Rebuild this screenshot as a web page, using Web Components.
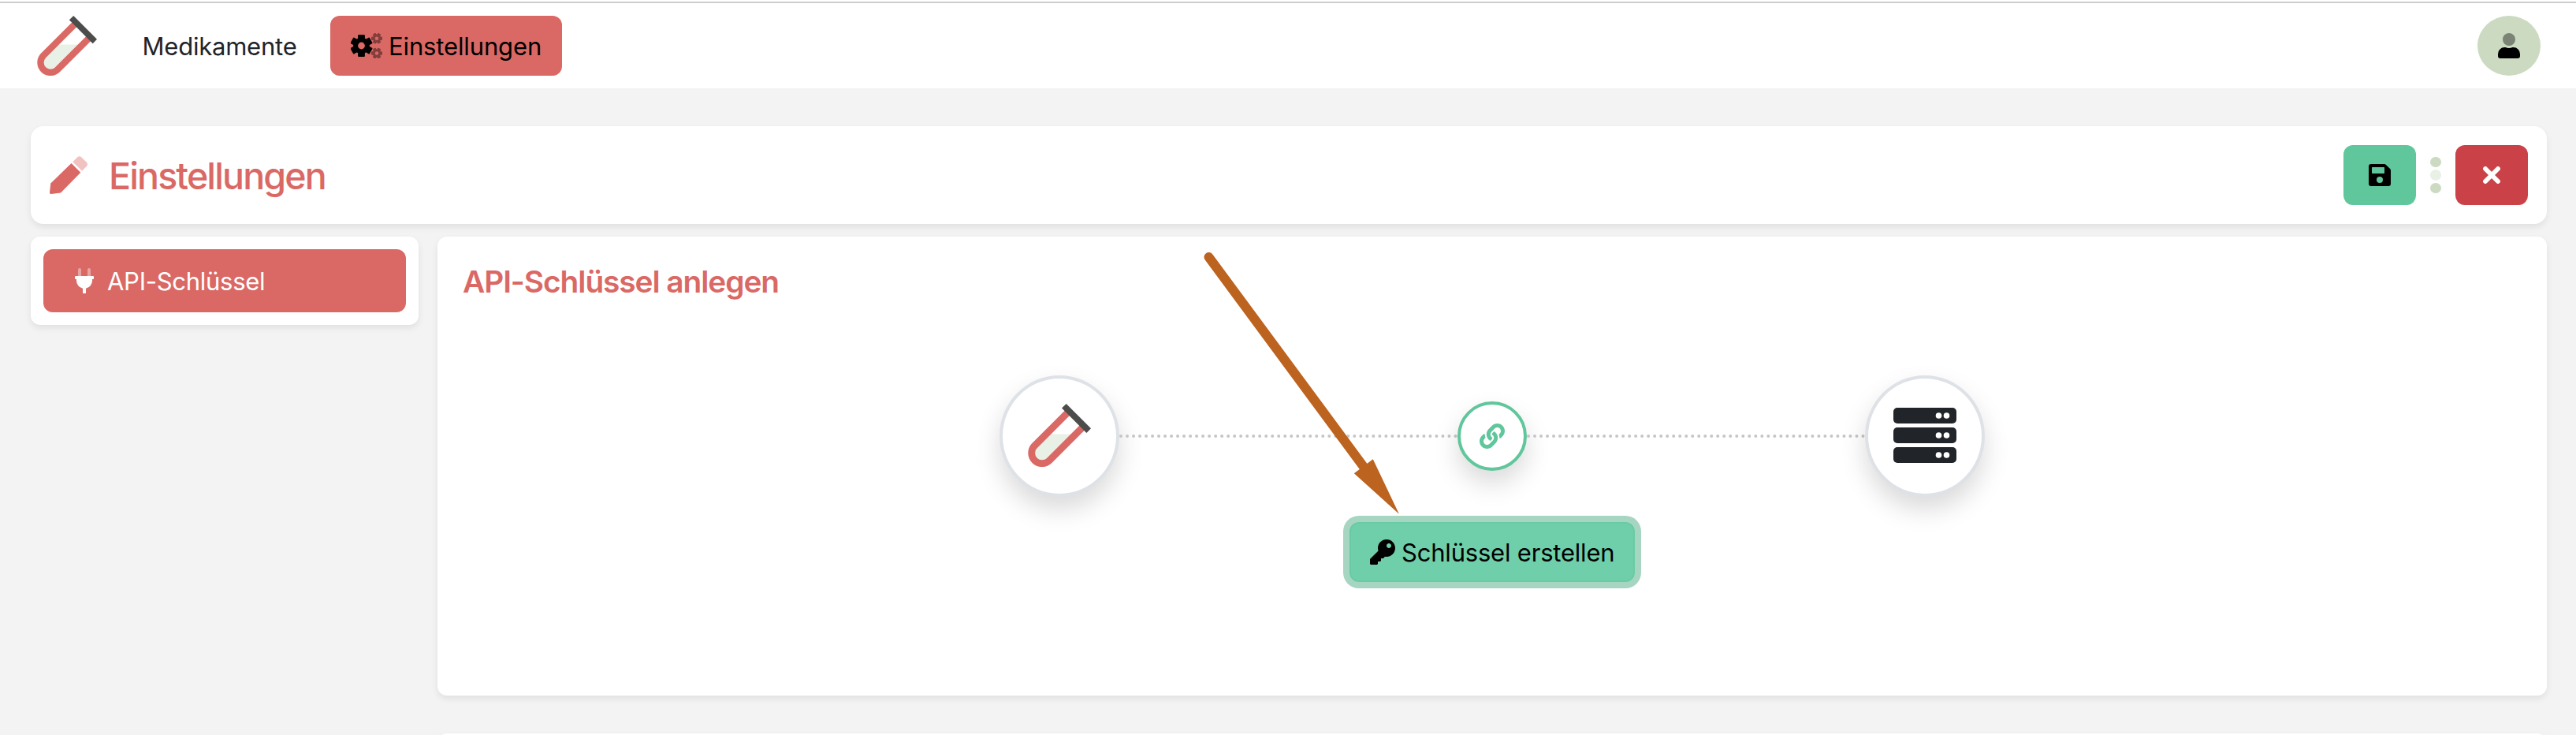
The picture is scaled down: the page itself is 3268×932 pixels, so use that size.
<!DOCTYPE html>
<html lang="de">
<head>
<meta charset="utf-8">
<title>Einstellungen</title>
<style>
html,body{margin:0;height:932px;overflow:hidden;background:#f3f3f3}
body{font-family:Inter,"Liberation Sans",sans-serif;font-size:31px;line-height:48px;color:#212529}
</style>
</head>
<body>
<app-page></app-page>
<script>
const define = (name, html) => customElements.define(name, class extends HTMLElement {
  constructor() {
    super();
    const t = document.createElement('template');
    t.innerHTML = html;
    this.attachShadow({mode: 'open'}).append(t.content.cloneNode(true));
  }
});

const spokes = (cx, cy, r, w, turn) => [0, 60, 120].map(a =>
  `<rect x="${cx - w / 2}" y="${cy - r}" width="${w}" height="${2 * r}" rx="1" transform="rotate(${a + turn} ${cx} ${cy})"/>`).join('');
const gear = (id, cx, cy, r, body, hole, w, turn, op) =>
  `<mask id="${id}"><rect width="40" height="40" fill="#fff"/><circle cx="${cx}" cy="${cy}" r="${hole}" fill="#000"/></mask>
   <g mask="url(#${id})" opacity="${op}"><circle cx="${cx}" cy="${cy}" r="${body}"/>${spokes(cx, cy, r, w, turn)}</g>`;

const ICONS = {
  tube: ['0 0 80 80', `<path d="M25 38.5H56L24 69.5A9.3 9.3 0 0 1 10.5 56Z" fill="#e9f1e6"/>
    <path d="M52.3 9.3 8.3 53.3A13.3 13.3 0 0 0 27.1 72.1L71.1 28.1" fill="none" stroke="#da6965" stroke-width="8.8"/>
    <path d="M48.7 0 80 31.3 74.4 37 43 5.6Z" fill="#4c4c4b"/>`],
  gears: ['0 0 40 32', gear('a', 13.5, 16, 14, 10.4, 4.4, 8.8, 0, 1) + gear('b', 33, 6.7, 7, 5.2, 2.2, 4.4, 30, .4) + gear('c', 33, 25.5, 7, 5.2, 2.2, 4.4, 30, .4)],
  user: ['0 0 28 32', `<circle cx="14" cy="8" r="8" opacity=".4"/><path d="M8.4 18h1.1a10.9 10.9 0 0 0 9 0h1.1A8.4 8.4 0 0 1 28 26.4V29a3 3 0 0 1-3 3H3a3 3 0 0 1-3-3v-2.6A8.4 8.4 0 0 1 8.4 18Z"/>`],
  pencil: ['0 0 48 48', `<path d="M27.5 9 39.3 20.8 14 46.6 2 48Q0 48.2 0 46L1.3 34.5Z"/><path d="M29.3 7.3 35 1.4Q37.7-1 40.4 1.4L46.8 7.8Q49.2 10.4 46.8 13L41 18.8Z" opacity=".4"/>`],
  plug: ['0 0 24 32', `<path d="M4 10V2a2 2 0 0 1 4 0v8ZM16 10V2a2 2 0 0 1 4 0v8Z" opacity=".4"/><path d="M1 10H23a1 1 0 0 1 1 1v2a1 1 0 0 1-1 1H22v2A10 10 0 0 1 14 25.8V32H10V25.8A10 10 0 0 1 2 16V14H1a1 1 0 0 1-1-1V11a1 1 0 0 1 1-1Z"/>`],
  save: ['0 0 28 28', `<path fill-rule="evenodd" d="M3 0H19.8a3 3 0 0 1 2.1.9l5.2 5.2A3 3 0 0 1 28 8.2V25a3 3 0 0 1-3 3H3a3 3 0 0 1-3-3V3A3 3 0 0 1 3 0ZM4.7 4A.7.7 0 0 0 4 4.7v6.6a.7.7 0 0 0 .7.7H19.3a.7.7 0 0 0 .7-.7V4.7a.7.7 0 0 0-.7-.7ZM14 16a4 4 0 1 0 0 8 4 4 0 0 0 0-8Z"/>`],
  cross: ['0 0 22 22', `<path d="M3 3 19 19M19 3 3 19" fill="none" stroke="currentColor" stroke-width="5.8" stroke-linecap="round"/>`],
  link: ['0 0 512 512', `<path d="M326.612 185.391c59.747 59.809 58.927 155.698.36 214.59-.11.12-.24.25-.36.37l-67.2 67.2c-59.27 59.27-155.699 59.262-214.96 0-59.27-59.26-59.27-155.7 0-214.96l37.106-37.106c9.84-9.84 26.786-3.3 27.294 10.606.648 17.722 3.826 35.527 9.69 52.721 1.986 5.822.567 12.262-3.783 16.612l-13.087 13.087c-28.026 28.026-28.905 73.66-1.155 101.96 28.024 28.579 74.086 28.749 102.325.51l67.2-67.19c28.191-28.191 28.073-73.757 0-101.83-3.701-3.694-7.429-6.564-10.341-8.569a16.037 16.037 0 0 1-6.947-12.606c-.396-10.567 3.348-21.456 11.698-29.806l21.054-21.055c5.521-5.521 14.182-6.199 20.584-1.731a152.482 152.482 0 0 1 20.522 17.197zM467.547 44.449c-59.261-59.262-155.69-59.27-214.96 0l-67.2 67.2c-.12.12-.25.25-.36.37-58.566 58.892-59.387 154.781.36 214.59a152.454 152.454 0 0 0 20.521 17.196c6.402 4.468 15.064 3.789 20.584-1.731l21.054-21.055c8.35-8.35 12.094-19.239 11.698-29.806a16.037 16.037 0 0 0-6.947-12.606c-2.912-2.005-6.64-4.875-10.341-8.569-28.073-28.073-28.191-73.639 0-101.83l67.2-67.19c28.239-28.239 74.3-28.069 102.325.51 27.75 28.3 26.872 73.934-1.155 101.96l-13.087 13.087c-4.35 4.35-5.769 10.79-3.783 16.612 5.864 17.194 9.042 34.999 9.69 52.721.509 13.906 17.454 20.446 27.294 10.606l37.106-37.106c59.271-59.259 59.271-155.699.001-214.959z"/>`],
  key: ['0 0 512 512', `<path d="M512 176.001C512 273.203 433.202 352 336 352c-11.22 0-22.19-1.062-32.827-3.069l-24.012 27.014A23.999 23.999 0 0 1 261.223 384H224v40c0 13.255-10.745 24-24 24h-40v40c0 13.255-10.745 24-24 24H24c-13.255 0-24-10.745-24-24v-78.059c0-6.365 2.529-12.47 7.029-16.971l161.802-161.802C163.108 213.814 160 195.271 160 176 160 78.798 238.797.001 335.999 0 433.488-.001 512 78.511 512 176.001zM336 128c0 26.51 21.49 48 48 48s48-21.49 48-48-21.49-48-48-48-48 21.49-48 48z"/>`],
  server: ['0 0 80 70', [0, 25, 50].map(y => `<rect y="${y}" width="80" height="20" rx="5"/><circle cx="57.5" cy="${y + 10}" r="3.8" fill="#fff"/><circle cx="67.5" cy="${y + 10}" r="3.8" fill="#fff"/>`).join('')]
};

customElements.define('app-icon', class extends HTMLElement {
  constructor() { super(); this.attachShadow({mode: 'open'}); }
  connectedCallback() {
    const [box, art] = ICONS[this.getAttribute('name')];
    this.shadowRoot.innerHTML = `<style>:host{display:block;flex:none}svg{display:block;width:100%;height:100%}</style>
      <svg viewBox="${box}" fill="currentColor">${art}</svg>`;
  }
});

define('nav-link', `<style>
:host{display:flex;align-items:center;height:76px;box-sizing:border-box;white-space:nowrap}
:host([active]){background:#da6965;border-radius:12px;color:#000}
span{padding-top:2px}
</style><slot name="icon"></slot><span><slot></slot></span>`);

define('nav-bar', `<style>
:host{display:flex;height:112px;box-sizing:border-box;padding:20px 45px 16px 47px;background:linear-gradient(#fff 2px,#cdcdcd 2px 4px,#fff 4px);align-items:flex-start}
.logo{width:76px;height:76px}
.plain{margin-left:57.5px;width:238.5px;letter-spacing:-.22px}
.on{width:294px;padding-left:26px;letter-spacing:-.13px}
.gears{width:40px;height:32px;margin-right:8px}
.avatar{margin-left:auto;width:80px;height:76px;border-radius:50%;background:#cbdac1;color:#000;display:flex;align-items:center;justify-content:center}
.avatar app-icon{width:28px;height:32px}
</style>
<app-icon class="logo" name="tube"></app-icon>
<nav-link class="plain">Medikamente</nav-link>
<nav-link class="on" active><app-icon slot="icon" class="gears" name="gears"></app-icon>Einstellungen</nav-link>
<div class="avatar"><app-icon name="user"></app-icon></div>`);

define('ui-card', `<style>
:host{display:block;box-sizing:border-box;background:#fff;border-radius:12px;box-shadow:0 4px 8px rgba(0,0,0,.08)}
</style><slot></slot>`);

define('icon-button', `<style>
:host{display:flex;align-items:center;justify-content:center;width:92px;height:76px;border-radius:12px}
</style><slot></slot>`);

define('page-header', `<style>
ui-card{height:124px;border-radius:16px}
.row{display:flex;align-items:center;height:124px;padding:0 24px;color:#da6965}
.pencil{width:48px;height:48px}
h1{margin:0 auto 0 27px;padding-top:2px;font-size:46.5px;line-height:58px;font-weight:500;letter-spacing:-1.85px}
.save{background:#60c69b;color:#000}.save app-icon{width:28px;height:28px}
.close{background:#ca4248;color:#fff}.close app-icon{width:22px;height:22px}
.dots{display:grid;gap:3px;margin:0 18px}
.dots i{width:14px;height:13.6px;border-radius:50%;background:#cbdac1}
.dots i:nth-child(2){background:#e9f1e6}
</style><ui-card><div class="row">
<app-icon class="pencil" name="pencil"></app-icon><h1>Einstellungen</h1>
<icon-button class="save"><app-icon name="save"></app-icon></icon-button>
<div class="dots"><i></i><i></i><i></i></div>
<icon-button class="close"><app-icon name="cross"></app-icon></icon-button>
</div></ui-card>`);

define('side-menu', `<style>
ui-card{padding:16px;height:112px}
.item{display:flex;align-items:center;height:80px;border-radius:12px;background:#da6965;color:#fff;padding-left:40px;letter-spacing:-.27px}
app-icon{width:24px;height:32px;margin-right:17px}
span{padding-top:2px}
</style><ui-card><div class="item"><app-icon name="plug"></app-icon><span>API-Schlüssel</span></div></ui-card>`);

define('node-circle', `<style>
:host{display:flex;align-items:center;justify-content:center;box-sizing:border-box;flex:none;width:152px;height:154px;border:4px solid #dee2e6;border-radius:50%;background:#fff;box-shadow:0 16px 32px rgba(0,0,0,.15)}
:host([small]){width:88px;height:88px;border-color:#60c69b;color:#60c69b}
</style><slot></slot>`);

define('key-link', `<style>
:host{display:flex;align-items:center;width:1250px;height:154px;margin:0 auto}
.line{flex:1;border-top:4px dotted #c6c6c6}
.tube{width:80px;height:80px;margin-bottom:2px}.link{width:32px;height:32px}.server{width:80px;height:70px;margin-bottom:2px}
</style>
<node-circle><app-icon class="tube" name="tube"></app-icon></node-circle><div class="line"></div>
<node-circle small><app-icon class="link" name="link"></app-icon></node-circle><div class="line"></div>
<node-circle><app-icon class="server" name="server"></app-icon></node-circle>`);

define('create-button', `<style>
:host{display:flex;align-items:center;box-sizing:border-box;width:362px;height:76px;margin:32px auto 0;padding-left:24px;border:2px solid #69cba5;border-radius:12px;background:#6fcfaa;box-shadow:0 0 0 8px #a6d5c1;color:#000;white-space:nowrap;letter-spacing:-.2px}
app-icon{width:32px;height:32px;margin-right:8px}
span{padding-top:2px}
</style><app-icon name="key"></app-icon><span><slot></slot></span>`);

define('key-panel', `<style>
ui-card{height:582px;padding-top:33px}
h2{margin:0 0 95px 32px;font-size:38.8px;line-height:48px;font-weight:600;color:#da6965;letter-spacing:-1.05px}
</style><ui-card><h2>API-Schlüssel anlegen</h2><key-link></key-link><create-button>Schlüssel erstellen</create-button></ui-card>`);

define('pointer-arrow', `<style>
:host{position:absolute;left:1520px;top:310px;width:270px;height:350px;pointer-events:none}svg{display:block}
</style><svg width="270" height="350" fill="#bd6320"><path d="M13.5 16 210 282" stroke="#bd6320" stroke-width="12" stroke-linecap="round"/><path d="M221.8 272.2 254.9 341.8 197.8 290.3Z"/></svg>`);

define('app-page', `<style>
:host{display:block;height:932px;overflow:hidden}
main{padding:48px 37px 0 39px}
.cols{display:grid;grid-template-columns:492px 2676px;gap:24px;margin-top:16px}
.next{height:100px;margin-top:48px}
</style><nav-bar></nav-bar><main><page-header></page-header>
<div class="cols"><side-menu></side-menu><div><key-panel></key-panel><ui-card class="next"></ui-card></div></div></main><pointer-arrow></pointer-arrow>`);
</script>
</body>
</html>
